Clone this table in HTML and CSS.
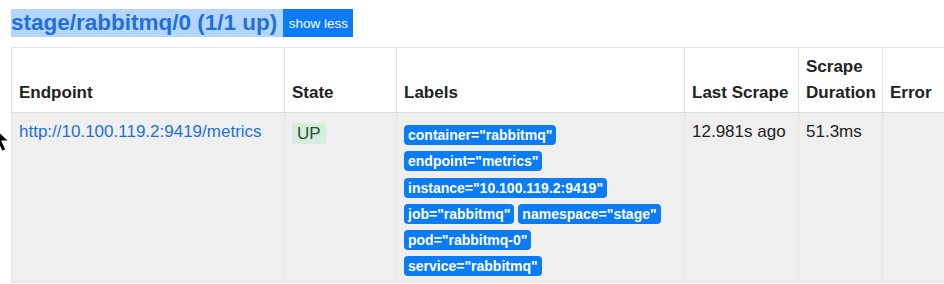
FILE: index.html
```html
<!DOCTYPE html>
<html>
<head>
<meta charset="utf-8">
<link rel="stylesheet" href="styles.css">
</head>
<body>
<div class="page">
  <div class="head">
    <span class="title">stage/rabbitmq/0 (1/1 up)</span><button class="toggle">show less</button>
  </div>
  <table class="targets">
    <colgroup>
      <col class="c-endpoint"><col class="c-state"><col class="c-labels"><col class="c-last"><col class="c-dur"><col class="c-err">
    </colgroup>
    <thead>
      <tr>
        <th>Endpoint</th>
        <th>State</th>
        <th>Labels</th>
        <th>Last Scrape</th>
        <th>Scrape Duration</th>
        <th>Error</th>
      </tr>
    </thead>
    <tbody>
      <tr>
        <td><a class="link" href="#">http://10.100.119.2:9419/metrics</a></td>
        <td><span class="up">UP</span></td>
        <td class="labels-cell">
          <div class="labels">
            <span class="badge">container="rabbitmq"</span>
            <span class="badge">endpoint="metrics"</span>
            <span class="badge">instance="10.100.119.2:9419"</span>
            <span class="badge">job="rabbitmq"</span>
            <span class="badge">namespace="stage"</span>
            <span class="badge">pod="rabbitmq-0"</span>
            <span class="badge">service="rabbitmq"</span>
          </div>
        </td>
        <td>12.981s ago</td>
        <td>51.3ms</td>
        <td></td>
      </tr>
    </tbody>
  </table>
</div>
<svg class="cursor" width="18" height="28" viewBox="0 0 18 28">
  <path d="M-7 -2 L-7 19 L-2 14.5 L2 23.5 L6 21.8 L2 13 L9 13 Z" fill="#000" stroke="#fff" stroke-width="1.2"/>
</svg>
</body>
</html>
```

FILE: styles.css
```css
* { box-sizing: border-box; }

html, body {
  margin: 0;
  background: #ffffff;
  overflow: hidden;
}

body {
  font-family: "Liberation Sans", Arial, sans-serif;
  color: #212529;
  position: relative;
  width: 944px;
  height: 284px;
}

.page {
  padding: 9px 0 0 11px;
}

.head {
  display: flex;
  height: 28px;
}

.title {
  background: #b4d5fc;
  color: #1f70d8;
  font-weight: bold;
  font-size: 22.5px;
  line-height: 28px;
  padding-right: 6px;
  white-space: nowrap;
}

.toggle {
  background: #0b7cf4;
  color: #ffffff;
  border: 0;
  border-radius: 0;
  font-family: "Liberation Sans", Arial, sans-serif;
  font-size: 13.5px;
  height: 28px;
  width: 70px;
  padding: 0;
}

.targets {
  margin-top: 10px;
  border-collapse: collapse;
  table-layout: fixed;
  width: 1000px;
}

.c-endpoint { width: 273px; }
.c-state { width: 112px; }
.c-labels { width: 288px; }
.c-last { width: 114px; }
.c-dur { width: 84px; }
.c-err { width: 129px; }

.targets th {
  vertical-align: bottom;
  text-align: left;
  font-size: 17px;
  line-height: 26px;
  font-weight: bold;
  padding: 6px 7px;
  border: 1px solid #e4e4e4;
  color: #222;
}

.targets thead th {
  border-bottom: 1px solid #dcdcdc;
}

.targets td {
  vertical-align: top;
  font-size: 17px;
  line-height: 26px;
  padding: 6px 7px 6px;
  background: #efefef;
  border: 1px solid #e4e4e4;
  color: #222;
}

.link {
  color: #1f6fd6;
  text-decoration: none;
}

.up {
  display: inline-block;
  background: #d6ecdc;
  color: #2b4f36;
  padding: 0 5px;
  line-height: 21px;
  margin-top: 4px;
  border-radius: 2px;
}

.targets td.labels-cell {
  padding: 12px 12px 6px 7px;
}

.labels {
  display: flex;
  flex-wrap: wrap;
  column-gap: 4px;
  row-gap: 6.3px;
}

.badge {
  display: inline-block;
  background: #0b7cf4;
  color: #ffffff;
  font-weight: bold;
  font-size: 14px;
  line-height: 20px;
  height: 20px;
  padding: 0 4px;
  border-radius: 4px;
  white-space: nowrap;
}

.cursor {
  position: absolute;
  left: 0;
  top: 128px;
  overflow: visible;
}
```
